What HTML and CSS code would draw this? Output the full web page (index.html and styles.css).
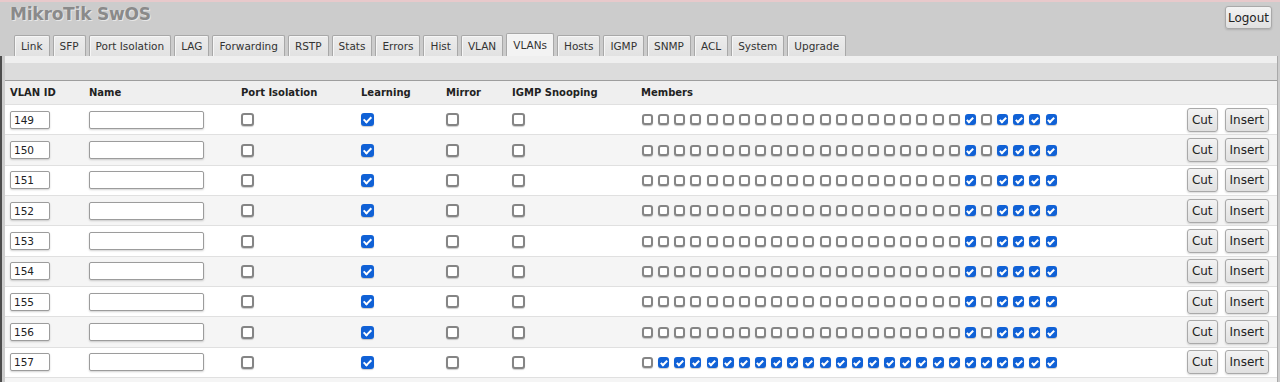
FILE: index.html
```html
<!DOCTYPE html>
<html lang="en">
<head>
    <meta charset="UTF-8">
    <meta name="viewport" content="width=device-width, initial-scale=1.0">
    <title>MikroTik SwOS - VLANs</title>
    <link rel="stylesheet" href="styles.css">
</head>
<body>
    <header class="top">
        <div class="title-bar">
            <span class="brand">MikroTik SwOS</span>
            <button class="btn logout">Logout</button>
        </div>
        <nav class="tabs">
            <a class="tab">Link</a>
            <a class="tab">SFP</a>
            <a class="tab">Port Isolation</a>
            <a class="tab">LAG</a>
            <a class="tab">Forwarding</a>
            <a class="tab">RSTP</a>
            <a class="tab">Stats</a>
            <a class="tab">Errors</a>
            <a class="tab">Hist</a>
            <a class="tab">VLAN</a>
            <a class="tab active">VLANs</a>
            <a class="tab">Hosts</a>
            <a class="tab">IGMP</a>
            <a class="tab">SNMP</a>
            <a class="tab">ACL</a>
            <a class="tab">System</a>
            <a class="tab">Upgrade</a>
        </nav>
    </header>

    <div class="main">
        <div class="panel">
            <div class="band-light"></div>
            <div class="band-dark"></div>
            <div class="vlan-table" id="vlanTable">
                <div class="grid-row head">
                    <span>VLAN ID</span>
                    <span>Name</span>
                    <span>Port Isolation</span>
                    <span>Learning</span>
                    <span>Mirror</span>
                    <span>IGMP Snooping</span>
                    <span>Members</span>
                    <span></span>
                </div>
            </div>
        </div>
    </div>

    <script>
        // vlan id, members pattern (1 = member), 26 ports
        const vlans = [];
        const usual = '00000000000000000000101111';
        const all = '01111111111111111111111111';
        for (let id = 149; id <= 156; id++) vlans.push({ id, members: usual });
        vlans.push({ id: 157, members: all });

        function checkbox(checked, extra) {
            return `<input type="checkbox" class="cb ${extra || ''}"${checked ? ' checked' : ''}>`;
        }

        const table = document.getElementById('vlanTable');
        vlans.forEach((v, i) => {
            const row = document.createElement('div');
            row.className = 'grid-row' + (i % 2 ? ' alt' : '');
            const members = v.members.split('').map(m => checkbox(m === '1', 'small')).join('');
            row.innerHTML = `
                <span><input class="field id-field" value="${v.id}"></span>
                <span><input class="field name-field" value=""></span>
                <span>${checkbox(false)}</span>
                <span>${checkbox(true)}</span>
                <span>${checkbox(false)}</span>
                <span>${checkbox(false)}</span>
                <span class="members">${members}</span>
                <span class="actions"><button class="btn">Cut</button><button class="btn">Insert</button></span>
            `;
            table.appendChild(row);
        });
    </script>
</body>
</html>
```

FILE: styles.css
```css
html, body {
    margin: 0;
    overflow: hidden;
}
body {
    font-family: "DejaVu Sans", Verdana, sans-serif;
    background: #cccccc;
    color: #222;
}
.top {
    background: #cccccc;
    border-top: 2px solid #e8c9cb;
    height: 54px;
    display: flex;
    flex-direction: column;
}
.title-bar {
    height: 32px;
    display: flex;
    justify-content: space-between;
    align-items: flex-start;
    padding: 0 8px 0 10px;
}
.brand {
    margin-top: 2px;
    font-size: 17px;
    line-height: 20px;
    font-weight: bold;
    color: #8a8a8a;
    letter-spacing: -0.2px;
    text-shadow: 1px 1px 0 #e6e6e6, -1px 0 0 #d8d8d8;
}
.btn {
    font-family: "DejaVu Sans", Verdana, sans-serif;
    font-size: 12px;
    color: #222;
    height: 24px;
    padding: 0 4px;
    background: linear-gradient(#f3f3f3, #e0e0e0);
    border: 1px solid #a9a9a9;
    border-radius: 3px;
    box-shadow: 0 1px 2px rgba(0, 0, 0, 0.15);
    cursor: pointer;
}
.logout {
    margin-top: 4px;
    height: 23px;
    padding: 0 2px;
}
.tabs {
    height: 22px;
    display: flex;
    align-items: flex-end;
    gap: 3px;
    padding-left: 14px;
}
.tab {
    height: 20px;
    line-height: 20px;
    padding: 0 6px;
    font-size: 10.5px;
    color: #333;
    background: linear-gradient(#ececec, #e2e2e2);
    border: 1px solid #a8a8a8;
    border-bottom: none;
    border-radius: 2px 2px 0 0;
    box-shadow: inset 1px 1px 0 #f6f6f6;
    cursor: pointer;
}
.tab.active {
    height: 22px;
    line-height: 23px;
    background: #f3f3f3;
}
.main {
    border-left: 2px solid #4c4c4c;
    padding: 0 0 0 3px;
}
.panel {
    background: #fff;
    border-right: 1px solid #a9a9a9;
    margin-right: 2px;
}
.band-light {
    height: 7px;
    background: #efefef;
}
.band-dark {
    height: 17px;
    background: #dcdcdc;
    border-bottom: 1px solid #9e9e9e;
}
.vlan-table::after {
    content: "";
    display: block;
    height: 12px;
    border-top: 1px solid #e0e0e0;
    background: #f5f5f5;
}
.grid-row {
    display: grid;
    grid-template-columns: 79px 152px 120px 85px 66px 129px 1fr auto;
    align-items: center;
    padding: 0 8px 0 5px;
    height: 30.35px;
    box-sizing: border-box;
    border-top: 1px solid #e0e0e0;
    background: #fff;
}
.grid-row.alt {
    background: #f5f5f5;
}
.grid-row.head {
    height: 23px;
    border-top: none;
    background: #efefef;
    font-size: 10px;
    font-weight: bold;
    color: #222;
}
.grid-row > span {
    display: flex;
    align-items: center;
}
.field {
    box-sizing: border-box;
    height: 18px;
    padding: 0 3px;
    font-family: "DejaVu Sans", Verdana, sans-serif;
    font-size: 10.5px;
    color: #222;
    border: 1px solid #9c9c9c;
    border-radius: 2px;
    background: #fff;
    box-shadow: 0 1px 2px rgba(0, 0, 0, 0.18);
    outline: none;
}
.id-field {
    width: 40px;
}
.name-field {
    width: 115px;
}
.cb {
    appearance: none;
    -webkit-appearance: none;
    box-sizing: border-box;
    width: 13px;
    height: 13px;
    margin: 0;
    border: 2px solid #858585;
    border-radius: 3px;
    background: #fff;
    box-shadow: 0 1px 1px rgba(0, 0, 0, 0.2);
    cursor: pointer;
}
.cb:checked {
    background: #1061d6;
    border-color: #1061d6;
}
.cb:checked::after {
    content: "";
    display: block;
    width: 3px;
    height: 6px;
    margin: 0 auto;
    border: solid #fff;
    border-width: 0 2px 2px 0;
    transform: rotate(45deg);
}
.cb.small {
    width: 11px;
    height: 11px;
}
.cb.small:checked::after {
    width: 2px;
    height: 5px;
}
.members {
    gap: 5.15px;
    padding-left: 1px;
}
.actions {
    gap: 7px;
}
```
